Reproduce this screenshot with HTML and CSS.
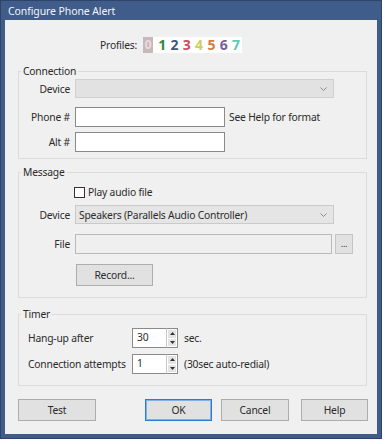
FILE: index.html
```html
<!DOCTYPE html>
<html>
<head>
<meta charset="utf-8">
<link rel="stylesheet" href="styles.css">
</head>
<body>
<div class="window">
  <div class="titlebar">Configure Phone Alert</div>
  <div class="client">
    <div class="profiles">
      <span class="plabel">Profiles:</span>
      <span class="digits">
        <span class="d d0">0</span><span class="d d1">1</span><span class="d d2">2</span><span class="d d3">3</span><span class="d d4">4</span><span class="d d5">5</span><span class="d d6">6</span><span class="d d7">7</span>
      </span>
    </div>

    <fieldset class="group conn">
      <legend>Connection</legend>
      <div class="row r-dev">
        <span class="lbl">Device</span>
        <div class="select disabled"><span class="sel-text"></span><svg class="chev" width="7" height="4" viewBox="0 0 7 4"><path d="M0.5 0.5 L3.5 3.5 L6.5 0.5" fill="none" stroke="#8a8a8a" stroke-width="1"/></svg></div>
      </div>
      <div class="row r-phone">
        <span class="lbl">Phone #</span>
        <div class="input w150"></div>
        <span class="note">See Help for format</span>
      </div>
      <div class="row r-alt">
        <span class="lbl">Alt #</span>
        <div class="input w150"></div>
      </div>
    </fieldset>

    <fieldset class="group msg">
      <legend>Message</legend>
      <div class="row r-check">
        <span class="lbl"></span>
        <span class="checkbox"></span><span class="check-text">Play audio file</span>
      </div>
      <div class="row r-sdev">
        <span class="lbl">Device</span>
        <div class="select"><span class="sel-text">Speakers (Parallels Audio Controller)</span><svg class="chev" width="7" height="4" viewBox="0 0 7 4"><path d="M0.5 0.5 L3.5 3.5 L6.5 0.5" fill="none" stroke="#8a8a8a" stroke-width="1"/></svg></div>
      </div>
      <div class="row r-file">
        <span class="lbl">File</span>
        <div class="input file"></div>
        <div class="btn browse"><span class="dots">...</span></div>
      </div>
      <div class="row r-rec">
        <span class="lbl"></span>
        <div class="btn record">Record...</div>
      </div>
    </fieldset>

    <fieldset class="group timer">
      <legend>Timer</legend>
      <div class="trow t1">
        <span class="tlbl">Hang-up after</span>
        <div class="spin">
          <div class="spin-val">30</div>
          <div class="spin-btns">
            <div class="sb"><svg width="5" height="3" viewBox="0 0 5 3"><path d="M0 3 L2.5 0 L5 3 Z" fill="#333"/></svg></div>
            <div class="sb"><svg width="5" height="3" viewBox="0 0 5 3"><path d="M0 0 L2.5 3 L5 0 Z" fill="#333"/></svg></div>
          </div>
        </div>
        <span class="tnote">sec.</span>
      </div>
      <div class="trow t2">
        <span class="tlbl">Connection attempts</span>
        <div class="spin">
          <div class="spin-val">1</div>
          <div class="spin-btns">
            <div class="sb"><svg width="5" height="3" viewBox="0 0 5 3"><path d="M0 3 L2.5 0 L5 3 Z" fill="#333"/></svg></div>
            <div class="sb"><svg width="5" height="3" viewBox="0 0 5 3"><path d="M0 0 L2.5 3 L5 0 Z" fill="#333"/></svg></div>
          </div>
        </div>
        <span class="tnote">(30sec auto-redial)</span>
      </div>
    </fieldset>

    <div class="buttons">
      <div class="btn b-test">Test</div>
      <div class="btn b-ok">OK</div>
      <div class="btn b-cancel">Cancel</div>
      <div class="btn b-help">Help</div>
    </div>
  </div>
</div>
</body>
</html>
```

FILE: styles.css
```css
html, body {
  margin: 0;
  padding: 0;
  background: #ffffff;
}
body {
  font-family: "Noto Sans", "Open Sans", sans-serif;
  font-size: 10.3px;
  letter-spacing: -0.2px;
  color: #2b2b2b;
}
.window {
  width: 382px;
  height: 439px;
  box-sizing: border-box;
  background: #3f5c8a;
  border: 1px solid #2e4468;
  padding: 0 4px 4px 4px;
  display: flex;
  flex-direction: column;
}
.titlebar {
  height: 19px;
  line-height: 20px;
  color: #f2f5fa;
  font-size: 10.5px;
  letter-spacing: -0.1px;
  padding-left: 3px;
  flex: none;
}
.client {
  flex: 1;
  background: #f0f0f0;
  display: flex;
  flex-direction: column;
  padding: 17px 0 0 0;
}
.profiles {
  display: flex;
  align-items: center;
  height: 16px;
  padding-left: 95px;
}
.plabel {
  margin-right: 6px;
}
.digits {
  display: flex;
  background: #ffffff;
  height: 16px;
  align-items: center;
}
.d {
  width: 12.3px;
  text-align: center;
  font-weight: bold;
  font-size: 14px;
  letter-spacing: 0;
  line-height: 16px;
}
.d0 { background: #c8b7bb; color: #e8dcde; width: 10px; margin-right: 3px; font-size: 12px; }
.d1 { color: #2f8a3a; }
.d2 { color: #3b587e; }
.d3 { color: #c94f5e; }
.d4 { color: #c9d064; }
.d5 { color: #d27d3e; }
.d6 { color: #7b5f9b; }
.d7 { color: #62c9b3; }

.group {
  margin: 0 10px 0 13px;
  padding: 0;
  border: 1px solid #dcdcdc;
  min-width: 0;
}
.group legend {
  padding: 0 2px;
  margin-left: 2px;
  line-height: 16px;
}
.conn { margin-top: 10px; height: 96px; box-sizing: border-box; }
.msg { margin-top: 5px; height: 134px; box-sizing: border-box; }
.timer { margin-top: 8px; height: 80px; box-sizing: border-box; }

.row {
  display: flex;
  align-items: center;
}
.lbl {
  width: 51px;
  margin-right: 5px;
  text-align: right;
  flex: none;
}
.r-phone { margin-top: 9px; }
.r-alt { margin-top: 5px; }

.select {
  width: 259px;
  height: 19px;
  box-sizing: border-box;
  background: #e5e5e5;
  border: 1px solid #cacaca;
  display: flex;
  align-items: center;
  justify-content: space-between;
  padding: 0 6px 0 3px;
}
.select.disabled { background: #e2e2e2; border-color: #d0d0d0; }
.sel-text { white-space: nowrap; }
.input {
  height: 20px;
  box-sizing: border-box;
  background: #ffffff;
  border: 1px solid #8a8a8a;
}
.w150 { width: 150px; }
.note { margin-left: 4px; }

.r-check { height: 14px; margin-top: 5px; }
.checkbox {
  width: 9px;
  height: 9px;
  border: 1px solid #333;
  background: #fff;
  margin-left: -1px;
  margin-right: 3px;
}
.r-sdev { margin-top: 6px; }
.r-file { margin-top: 10px; }
.input.file {
  width: 257px;
  height: 20px;
  background: #efefef;
  border-color: #b9b9b9;
}
.btn {
  box-sizing: border-box;
  background: #e1e1e1;
  border: 1px solid #adadad;
  display: flex;
  align-items: center;
  justify-content: center;
}
.browse {
  width: 18px;
  height: 20px;
  margin-left: 3px;
  border-color: #c4c4c4;
}
.dots { font-size: 9px; line-height: 6px; color: #333; }
.r-rec { margin-top: 10px; }
.record {
  width: 77px;
  height: 22px;
  margin-left: 1px;
}

.trow {
  display: flex;
  align-items: center;
  padding-left: 9px;
}
.t1 { margin-top: 6px; }
.t2 { margin-top: 6px; }
.tlbl { width: 104px; flex: none; }
.spin {
  display: flex;
  height: 20px;
}
.spin-val {
  width: 34px;
  box-sizing: border-box;
  border: 1px solid #8a8a8a;
  border-right: none;
  background: #fff;
  padding-left: 4px;
  line-height: 17px;
}
.spin-btns {
  width: 12px;
  display: flex;
  flex-direction: column;
  border: 1px solid #8a8a8a;
  border-left: 1px solid #c8c8c8;
  box-sizing: border-box;
  background: #fff;
  padding: 1px;
  gap: 1px;
}
.sb {
  flex: 1;
  background: #e4e4e4;
  display: flex;
  align-items: center;
  justify-content: center;
}
.tnote { margin-left: 6px; }

.buttons {
  display: flex;
  margin-top: 13px;
  padding-left: 13px;
}
.buttons .btn { height: 22px; }
.b-test { width: 78px; }
.b-ok { width: 67px; margin-left: 49px; border: 1px solid #2f7ad0; box-shadow: inset 0 0 0 1px #7fb0e6; }
.b-cancel { width: 68px; margin-left: 9px; }
.b-help { width: 67px; margin-left: 12px; }
```
